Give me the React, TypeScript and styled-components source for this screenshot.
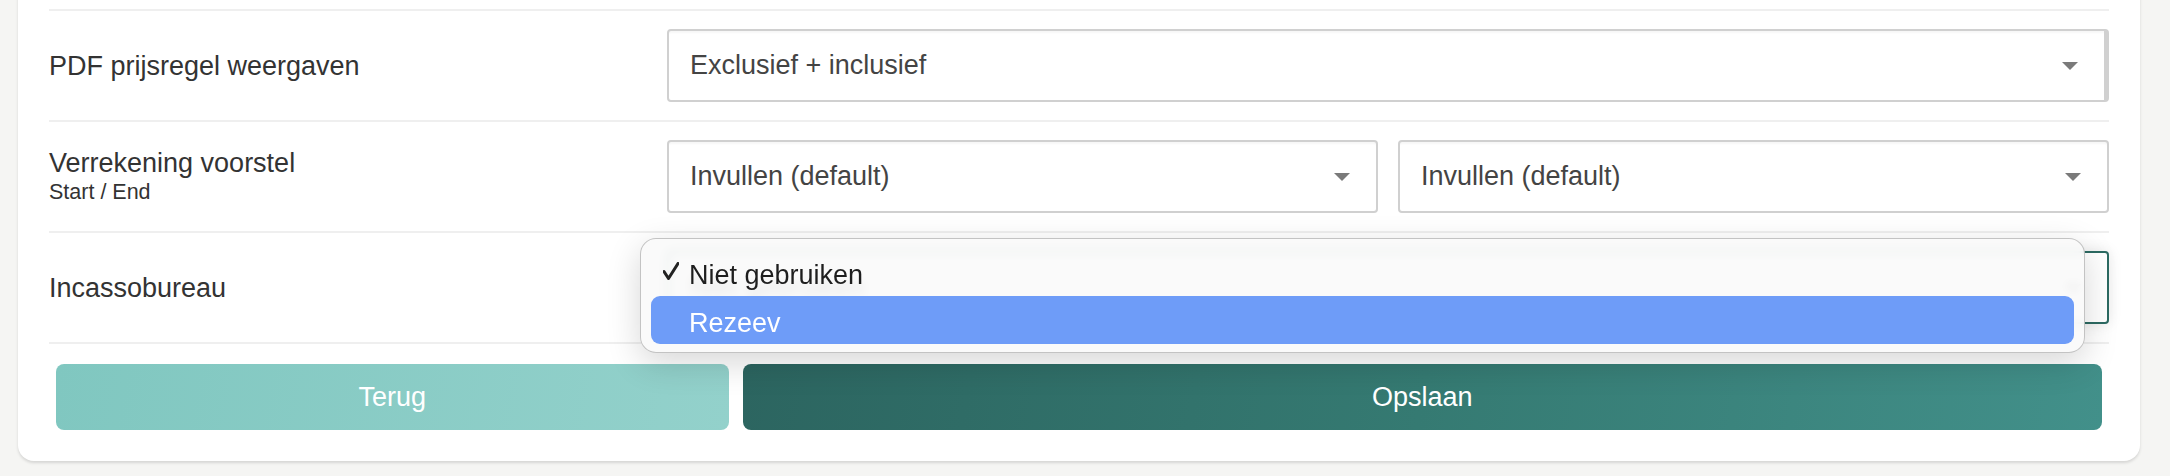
import React from 'react';
import styled, { createGlobalStyle } from 'styled-components';

const Global = createGlobalStyle`
  html, body { margin: 0; padding: 0; background: #f5f5f3; }
  body { font-family: "Liberation Sans", Arial, sans-serif; }
  * { box-sizing: border-box; }
`;

const Page = styled.div`
  padding: 0 30px 15px 18px;
  overflow: hidden;
`;

const Card = styled.div`
  margin-top: -20px;
  background: #fff;
  border-radius: 16px;
  box-shadow: 0 2px 3px rgba(0, 0, 0, 0.13);
  padding: 29px 31px 31px;
`;

const Rows = styled.div`
  border-bottom: 2px solid #efefef;
`;

const Row = styled.div`
  display: grid;
  grid-template-columns: 30% 1fr;
  align-items: center;
  padding: 18px 0;
  border-top: 2px solid #efefef;
`;

const Label = styled.div`
  display: flex;
  flex-direction: column;
  color: #333;
  font-size: 27px;
  line-height: 30px;
`;

const SubLabel = styled.span`
  font-size: 21.5px;
  line-height: 28px;
  color: #333;
`;

const Pair = styled.div`
  display: grid;
  grid-template-columns: 1fr 1fr;
  gap: 20px;
`;

const Select = styled.div<{ $focused?: boolean; $thickRight?: boolean }>`
  position: relative;
  height: 73px;
  display: flex;
  align-items: center;
  padding: 0 26px 0 21px;
  background: #fff;
  border: 2px solid ${(p) => (p.$focused ? '#2c6a62' : '#d0d0d0')};
  border-right-width: ${(p) => (p.$thickRight ? '5px' : '2px')};
  border-radius: 4px;
  box-shadow: ${(p) =>
    p.$focused
      ? '0 0 14px rgba(0,0,0,0.10)'
      : 'inset 0 3px 2px -1px rgba(0,0,0,0.035)'};
  color: #444;
  font-size: 27px;
`;

const Value = styled.span`
  flex: 1;
  white-space: nowrap;
`;

const Caret = styled.span`
  width: 0;
  height: 0;
  border-left: 8px solid transparent;
  border-right: 8px solid transparent;
  border-top: 8px solid #7a7a7a;
`;

const Menu = styled.div`
  position: absolute;
  left: -29px;
  top: -15px;
  width: calc(100% + 7px);
  padding: 9px 10px 8px;
  background: rgba(249, 250, 250, 0.9);
  backdrop-filter: blur(5px);
  border: 1px solid rgba(0, 0, 0, 0.22);
  border-radius: 16px;
  box-shadow: 0 10px 34px rgba(0, 0, 0, 0.16);
  z-index: 2;
`;

const Option = styled.div<{ $active?: boolean }>`
  height: 48px;
  display: flex;
  align-items: center;
  gap: 10px;
  padding: 7px 0 0 12px;
  border-radius: 9px;
  font-size: 27px;
  color: ${(p) => (p.$active ? '#fff' : '#1e1e1e')};
  background: ${(p) => (p.$active ? '#6e9cf8' : 'transparent')};
`;

const CheckSlot = styled.span`
  width: 16px;
  height: 18px;
  display: flex;
  margin-top: -9px;
`;

const Buttons = styled.div`
  display: grid;
  grid-template-columns: 1fr 2fr;
  padding-top: 20px;
`;

const Button = styled.button<{ $primary?: boolean }>`
  margin: 0 7px;
  height: 66px;
  border: 0;
  border-radius: 8px;
  color: #fff;
  font-family: "Liberation Sans", Arial, sans-serif;
  font-size: 27px;
  background: ${(p) =>
    p.$primary
      ? 'linear-gradient(100deg, #2c6560 0%, #357a72 50%, #42908a 100%)'
      : 'linear-gradient(100deg, #80c7c0 0%, #93d1cb 100%)'};
`;

const Check = () => (
  <svg width="16" height="18" viewBox="0 0 16 18">
    <path d="M1 9.5 L5.5 16.5 L15 1.5" fill="none" stroke="#222" strokeWidth="3" strokeLinecap="round" strokeLinejoin="round" />
  </svg>
);

export default function App() {
  return (
    <>
      <Global />
      <Page>
        <Card>
          <Rows>
            <Row>
              <Label>PDF prijsregel weergaven</Label>
              <Select $thickRight>
                <Value>Exclusief + inclusief</Value>
                <Caret />
              </Select>
            </Row>
            <Row>
              <Label>
                Verrekening voorstel
                <SubLabel>Start / End</SubLabel>
              </Label>
              <Pair>
                <Select>
                  <Value>Invullen (default)</Value>
                  <Caret />
                </Select>
                <Select>
                  <Value>Invullen (default)</Value>
                  <Caret />
                </Select>
              </Pair>
            </Row>
            <Row>
              <Label>Incassobureau</Label>
              <Select $focused>
                <Value>Niet gebruiken</Value>
                <Caret />
                <Menu>
                  <Option>
                    <CheckSlot>
                      <Check />
                    </CheckSlot>
                    Niet gebruiken
                  </Option>
                  <Option $active>
                    <CheckSlot />
                    Rezeev
                  </Option>
                </Menu>
              </Select>
            </Row>
          </Rows>
          <Buttons>
            <Button>Terug</Button>
            <Button $primary>Opslaan</Button>
          </Buttons>
        </Card>
      </Page>
    </>
  );
}
